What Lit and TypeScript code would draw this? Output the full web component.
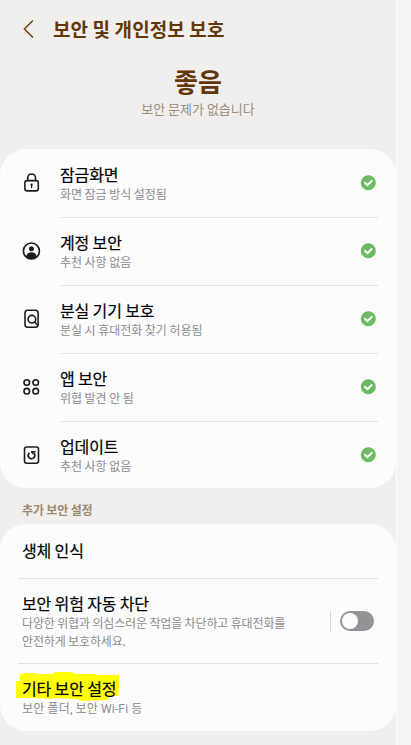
import { LitElement, html, svg, css } from "lit";
import { customElement, property } from "lit/decorators.js";

const icons: Record<string, unknown> = {
  lock: svg`<rect x="3.9" y="7.600" width="13.4" height="10.3" rx="2.2"/><path d="M6.7 7.600V4.900a3.900 3.900 0 0 1 7.800 0v2.700"/><path d="M10.6 11.800v2.800" stroke-width="1.2"/><circle cx="10.6" cy="11.700" r="1.100" class="solid"/>`,
  account: svg`<circle cx="10.4" cy="10" r="8"/><circle cx="10.4" cy="7.8" r="2.5" class="solid"/><path class="solid" d="M5 16c.5-3.200 2.500-4.700 5.400-4.700s4.900 1.500 5.400 4.700c-1.400 1.300-3.300 2-5.400 2s-4-.7-5.400-2z"/>`,
  find: svg`<rect x="4" y="1.200" width="13.100" height="17" rx="2.700"/><circle cx="10.900" cy="10.200" r="3.800"/><path d="M13.700 13l3.100 3"/>`,
  apps: svg`<circle cx="5.800" cy="5.500" r="2.800"/><circle cx="14.700" cy="5.500" r="2.800"/><circle cx="5.800" cy="14.200" r="2.800"/><circle cx="14.700" cy="14.200" r="2.800"/>`,
  update: svg`<rect x="3.500" y="2" width="14" height="16.200" rx="2.200"/><path d="M8 8.200a3.300 3.300 0 1 0 5.300.4"/><path class="solid" d="M10 6.100h4.600v1.300h-2v2.700L10 7.600z"/>`,
};

@customElement("status-row")
export class StatusRow extends LitElement {
  @property() icon = "";
  @property() name = "";
  @property() note = "";

  static styles = css`
    :host { display: flex; height: 68px; padding: 0 18px 0 21px; }
    .icon { width: 21px; height: 21px; margin: 24px 18px 0 0; flex: none; fill: none; stroke: #1c1c1e; stroke-width: 1.6; stroke-linecap: round; stroke-linejoin: round; }
    .solid { fill: #1c1c1e; stroke: none; }
    .body { flex: 1; display: flex; justify-content: space-between; border-bottom: 1px solid #e2e2e3; margin-bottom: -1px; }
    :host([last]) .body { border-color: transparent; }
    .name { font-size: 16px; line-height: 22px; letter-spacing: -0.15px; font-weight: 400; color: #000; -webkit-text-stroke: 0.2px #000; margin-top: 14px; }
    .note { font-size: 12px; line-height: 18px; letter-spacing: -0.05px; color: #8b8b8e; }
    .check { width: 16px; height: 16px; margin: 26px 2px 0 0; }
  `;

  render() {
    return html`
      <svg class="icon" viewBox="0 0 21 21">${icons[this.icon]}</svg>
      <div class="body">
        <div>
          <div class="name">${this.name}</div>
          <div class="note">${this.note}</div>
        </div>
        <svg class="check" viewBox="0 0 16 16">
          <circle cx="8.300" cy="7.800" r="7.500" fill="#6abb63"/>
          <path d="M5 7.700l2.500 2.500 4.200-4.200" fill="none" stroke="#fff" stroke-width="2" stroke-linecap="round" stroke-linejoin="round"/>
        </svg>
      </div>`;
  }
}

@customElement("app-root")
export class AppRoot extends LitElement {
  static styles = css`
    :host { display: flex; height: 745px; overflow: hidden; background: #f4f4f4; font-family: "Noto Sans CJK KR", sans-serif; }
    * { box-sizing: border-box; }
    .screen { width: 397px; height: 745px; background: #f0efed; border-right: 1px solid #fff; }
    .bar { display: flex; height: 58px; align-items: center; padding-left: 23px; }
    .back { width: 11px; height: 20px; fill: none; stroke: #6b3d0c; stroke-width: 1.500; stroke-linecap: round; stroke-linejoin: round; }
    h1 { margin: 0 0 0 19px; font-size: 19px; line-height: 28px; letter-spacing: 0.1px; font-weight: 700; color: #643709; }
    .summary { height: 91px; text-align: center; color: #643709; }
    .grade { font-size: 26px; line-height: 36px; font-weight: 700; padding-top: 5px; }
    .message { font-size: 13px; line-height: 20px; color: #9d8c7a; }
    .card { background: #fcfcfc; border-radius: 26px; }
    .status { height: 339px; }
    .section { height: 36px; padding: 12px 0 0 22px; font-size: 12px; line-height: 20px; letter-spacing: -0.15px; font-weight: 700; color: #9d8973; }
    .more { height: 207px; padding: 0 18px; }
    .item { padding: 0 4px; border-bottom: 1px solid #e2e2e3; }
    .item:last-child { border: 0; }
    .bio { height: 55px; padding-top: 15px; }
    .auto { height: 85px; display: flex; justify-content: space-between; align-items: center; }
    .auto .name { margin-top: -1px; }
    .auto .note { line-height: 17.5px; }
    .other { padding-top: 13px; }
    .name { font-size: 16px; line-height: 22px; letter-spacing: -0.150px; font-weight: 400; color: #000; -webkit-text-stroke: 0.2px #000; }
    .note { font-size: 12px; line-height: 17px; letter-spacing: -0.150px; color: #8b8b8e; white-space: pre-line; }
    .other .note { font-family: Roboto, "Noto Sans CJK KR", sans-serif; letter-spacing: 0.150px; padding-top: 2px; }
    .control { display: flex; align-items: center; gap: 9px; }
    .rule { width: 1px; height: 21px; background: #d8d8da; }
    .toggle { width: 34px; height: 20px; border-radius: 10px; background: #949398; padding: 2px; }
    .knob { width: 16px; height: 16px; border-radius: 8px; background: #fcfcfc; }
    .marked { position: relative; }
    .marker { position: absolute; left: -6px; top: -5px; width: 104px; height: 30px; fill: #ff0; }
    .label { position: relative; }
  `;

  render() {
    return html`
      <main class="screen">
        <header class="bar">
          <svg class="back" viewBox="0 0 11 20"><path d="M9.500 2L1.300 10l8.200 8"/></svg>
          <h1>보안 및 개인정보 보호</h1>
        </header>
        <section class="summary">
          <div class="grade">좋음</div>
          <div class="message">보안 문제가 없습니다</div>
        </section>
        <section class="card status">
          <status-row icon="lock" name="잠금화면" note="화면 잠금 방식 설정됨"></status-row>
          <status-row icon="account" name="계정 보안" note="추천 사항 없음"></status-row>
          <status-row icon="find" name="분실 기기 보호" note="분실 시 휴대전화 찾기 허용됨"></status-row>
          <status-row icon="apps" name="앱 보안" note="위협 발견 안 됨"></status-row>
          <status-row last icon="update" name="업데이트" note="추천 사항 없음"></status-row>
        </section>
        <div class="section">추가 보안 설정</div>
        <section class="card more">
          <div class="item bio"><div class="name">생체 인식</div></div>
          <div class="item auto">
            <div>
              <div class="name">보안 위험 자동 차단</div>
              <div class="note">${"다양한 위협과 의심스러운 작업을 차단하고 휴대전화를\n안전하게 보호하세요."}</div>
            </div>
            <div class="control"><div class="rule"></div><div class="toggle"><div class="knob"></div></div></div>
          </div>
          <div class="item other">
            <div class="name marked">
              <svg class="marker" viewBox="0 0 104 30"><path d="M0 9h4V3l5-2h10v1h18l2-2h17l3 2h22v1h22v12l-1 9h-8l-2 4-26 1-4-2-23-1-3 1-17-1H0z"/></svg>
              <span class="label">기타 보안 설정</span>
            </div>
            <div class="note">보안 폴더, 보안 Wi-Fi 등</div>
          </div>
        </section>
      </main>`;
  }
}
